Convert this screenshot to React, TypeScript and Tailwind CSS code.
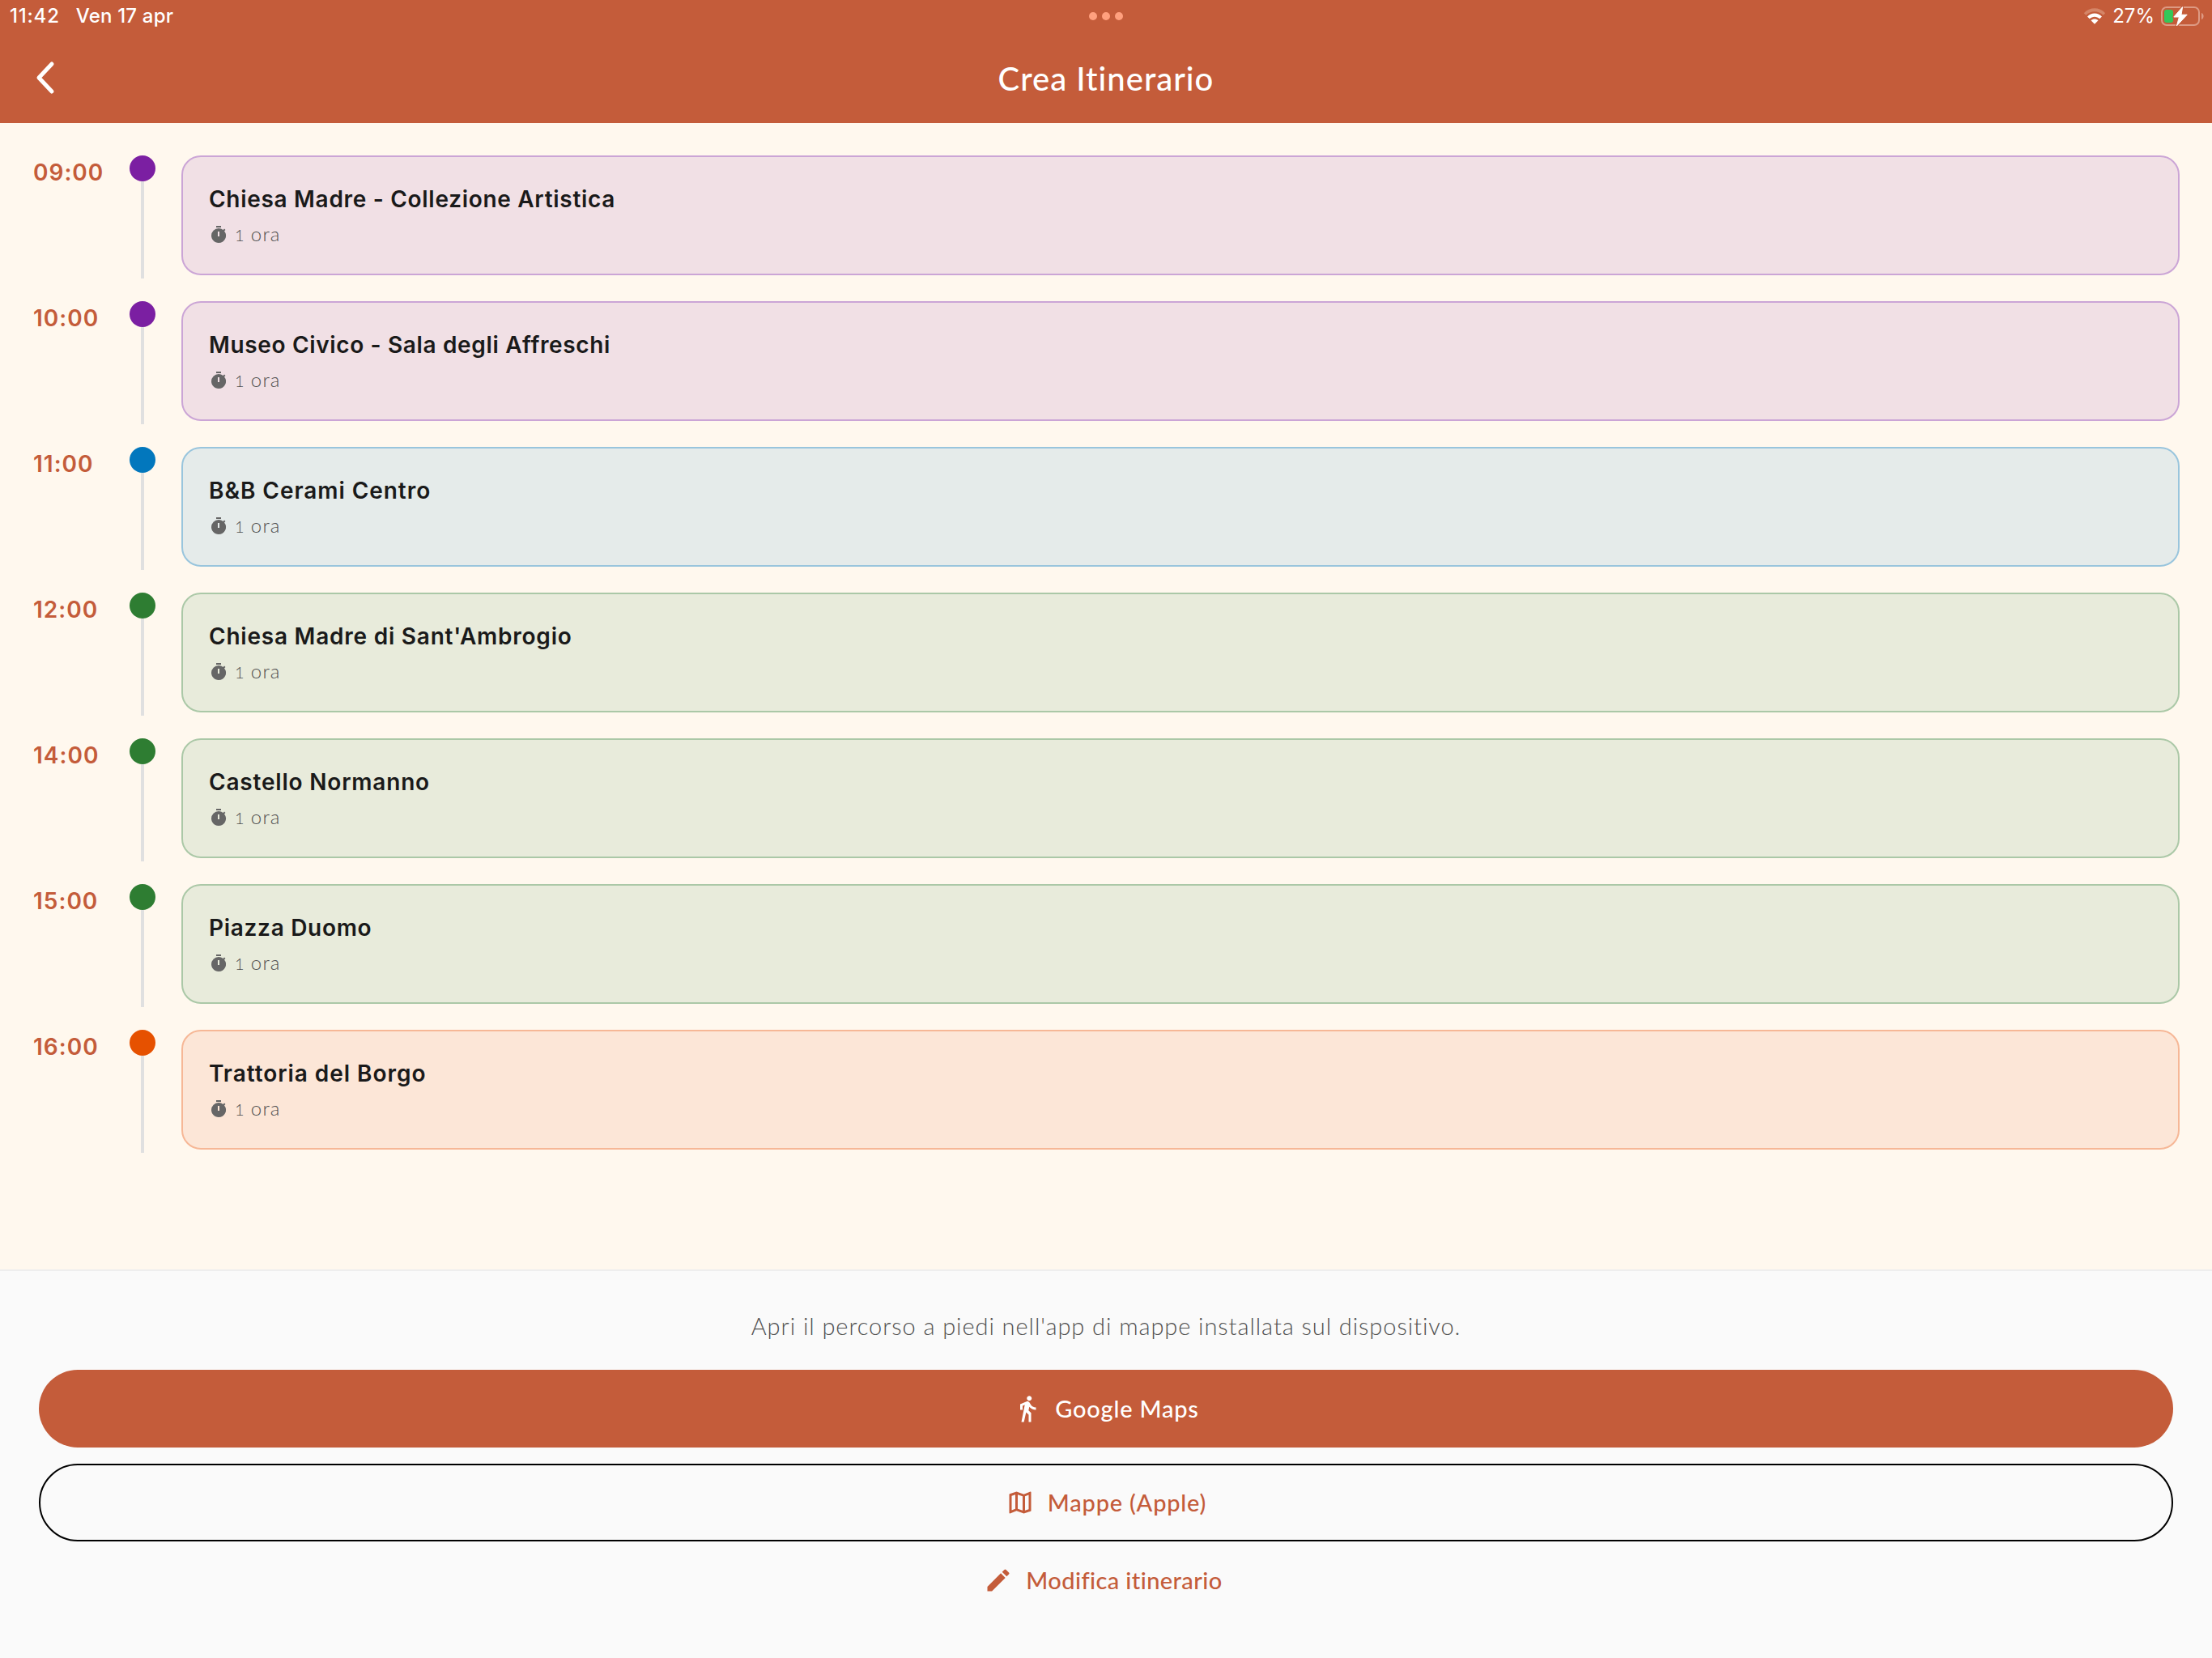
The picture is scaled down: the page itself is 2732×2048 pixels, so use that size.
import { MdDirectionsWalk, MdEdit, MdOutlineMap, MdTimer } from "react-icons/md";

type Stop = {
  time: string;
  title: string;
  tracking: string;
  dot: string;
  card: string;
};

const museum = { dot: "bg-[#7b1fa2]", card: "bg-[#f1e0e5] border-[#cba5d6]" };
const hotel = { dot: "bg-[#0277bd]", card: "bg-[#e5ebea] border-[#99c5dd]" };
const monument = { dot: "bg-[#2e7d32]", card: "bg-[#e8ebdb] border-[#abc8a7]" };
const food = { dot: "bg-[#e65100]", card: "bg-[#fce6d7] border-[#f6b796]" };

const stops: Stop[] = [
  { time: "09:00", title: "Chiesa Madre - Collezione Artistica", tracking: "tracking-[0.7px]", ...museum },
  { time: "10:00", title: "Museo Civico - Sala degli Affreschi", tracking: "tracking-[0.65px]", ...museum },
  { time: "11:00", title: "B&B Cerami Centro", tracking: "tracking-[0.95px]", ...hotel },
  { time: "12:00", title: "Chiesa Madre di Sant'Ambrogio", tracking: "tracking-[0.77px]", ...monument },
  { time: "14:00", title: "Castello Normanno", tracking: "tracking-[0.8px]", ...monument },
  { time: "15:00", title: "Piazza Duomo", tracking: "tracking-[0.7px]", ...monument },
  { time: "16:00", title: "Trattoria del Borgo", tracking: "tracking-[0.95px]", ...food },
];

const StatusBar = () => (
  <div className="grid h-10 grid-cols-3 items-center px-3 font-['Inter',sans-serif] text-[24px] font-medium leading-none">
    <div className="flex gap-5">
      <span className="tracking-[0.8px]">11:42</span>
      <span className="tracking-[0.2px]">Ven 17 apr</span>
    </div>
    <div className="flex justify-center gap-1.5">
      <span className="size-2.5 rounded-full bg-[#ffa07e]" />
      <span className="size-2.5 rounded-full bg-[#ffa07e]" />
      <span className="size-2.5 rounded-full bg-[#ffa07e]" />
    </div>
    <div className="-mr-[3px] flex items-center justify-end">
      <svg width="28" height="20" viewBox="0 0 28 20" className="mr-2">
        <path d="M0.8 6.2C8 -1.7 20 -1.7 27.2 6.2L24.6 8.8C19 2.7 9 2.7 3.4 8.8Z" fill="#d58567" />
        <path d="M5 10.4C10 5.3 18 5.3 23 10.4L20.2 13.2C16.8 9.8 11.2 9.8 7.8 13.2Z" fill="#fff" />
        <path d="M9.5 15.2C12 12.9 16 12.9 18.5 15.2L14 19.7Z" fill="#fff" />
      </svg>
      <span className="mr-2 font-normal">27%</span>
      <svg width="54" height="26" viewBox="0 0 54 26">
        <rect x="1" y="2" width="46" height="22" rx="6" fill="none" stroke="#dd9a83" strokeWidth="2" />
        <path d="M50 9C53.4 10 53.4 16 50 17Z" fill="#dd9a83" />
        <rect x="4" y="5" width="11" height="16" rx="3" fill="#34c759" />
        <path d="M26.6 1.6L15.8 14H22.4L19.4 25L32.2 11.2H25Z" fill="#fff" stroke="#c45c3a" strokeWidth="3" strokeLinejoin="round" />
        <path d="M26.6 1.6L15.8 14H22.4L19.4 25L32.2 11.2H25Z" fill="#fff" stroke="#fff" strokeWidth="1" strokeLinejoin="round" />
      </svg>
    </div>
  </div>
);

const StopRow = ({ time, title, tracking, dot, card }: Stop) => (
  <div className="flex h-[180px]">
    <div className="w-[120px] pl-px pt-1 font-['Inter',sans-serif] text-[28px] font-semibold leading-[34px] tracking-[1px] text-[#c45c3a]">
      {time}
    </div>
    <div className="flex w-8 flex-col items-center">
      <span className={`size-8 shrink-0 rounded-full ${dot}`} />
      <span className="h-[120px] w-1 bg-[#e0e0e0]" />
    </div>
    <div className={`ml-8 h-[148px] flex-1 rounded-[24px] border-2 pl-8 pt-[34px] ${card}`}>
      <h2 className={`font-['Inter',sans-serif] text-[28px] font-semibold leading-[36px] text-[#1a1a1a] ${tracking}`}>
        {title}
      </h2>
      <p className="mt-2 flex items-center font-['Lato',sans-serif] text-[24px] font-light leading-[34px] tracking-[1.2px] text-[#505050]">
        <MdTimer className="mr-2 size-6 text-[#666]" />
        <span className="flex items-baseline gap-[7px]">
          <span className="text-[20px]">1</span>
          <span>ora</span>
        </span>
      </p>
    </div>
  </div>
);

export default function App() {
  return (
    <div className="flex h-[2048px] w-[2732px] flex-col bg-[#fff8ee]">
      <header className="h-[152px] bg-[#c45c3a] text-white">
        <StatusBar />
        <div className="grid h-28 grid-cols-3 items-center px-10">
          <svg width="30" height="44" viewBox="0 0 30 44" fill="none">
            <path d="M24 5L8 22L24 39" stroke="#fff" strokeWidth="5" strokeLinecap="round" strokeLinejoin="round" />
          </svg>
          <h1 className="pt-px text-center font-['Lato',sans-serif] text-[40px] font-medium leading-none tracking-[1px] [font-variant-ligatures:none]">
            Crea Itinerario
          </h1>
        </div>
      </header>

      <main className="flex-1 px-10 pt-10">
        {stops.map((stop) => (
          <StopRow key={stop.time} {...stop} />
        ))}
      </main>

      <footer className="h-[480px] border-t-2 border-[#eeeeee] bg-[#fafafa] px-12 font-['Lato',sans-serif] text-[29px] [font-variant-ligatures:none]">
        <p className="pt-[50px] text-center font-light leading-[36px] tracking-[0.93px] text-[#505050]">
          Apri il percorso a piedi nell'app di mappe installata sul dispositivo.
        </p>
        <button className="mt-9 flex h-24 w-full items-center justify-center rounded-full bg-[#c45c3a] font-medium tracking-[0.8px] text-white">
          <MdDirectionsWalk className="mr-4 size-9" />
          <span>Google Maps</span>
        </button>
        <button className="mt-5 flex h-24 w-full items-center justify-center rounded-full border-2 border-black font-medium tracking-[0.8px] text-[#c45c3a]">
          <MdOutlineMap className="mr-4 size-9" />
          <span>Mappe (Apple)</span>
        </button>
        <button className="flex h-24 w-full items-center justify-center pr-[7px] font-medium tracking-[0.4px] text-[#c45c3a]">
          <MdEdit className="mr-4 size-9" />
          <span>Modifica itinerario</span>
        </button>
      </footer>
    </div>
  );
}
